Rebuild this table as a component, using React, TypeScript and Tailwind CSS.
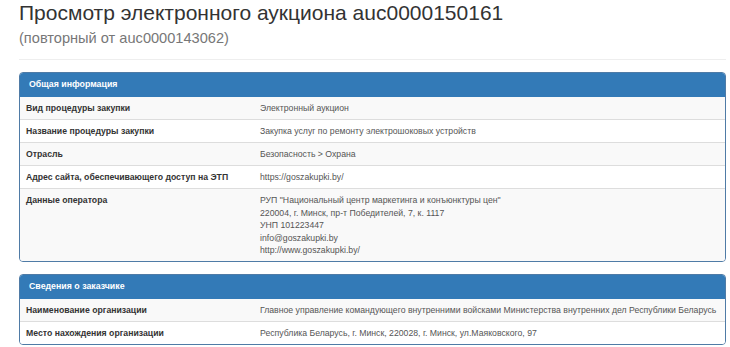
import React from "react";

type Row = { label: string; value: React.ReactNode };

const general: Row[] = [
  { label: "Вид процедуры закупки", value: "Электронный аукцион" },
  {
    label: "Название процедуры закупки",
    value: "Закупка услуг по ремонту электрошоковых устройств",
  },
  { label: "Отрасль", value: "Безопасность > Охрана" },
  {
    label: "Адрес сайта, обеспечивающего доступ на ЭТП",
    value: "https://goszakupki.by/",
  },
  {
    label: "Данные оператора",
    value: (
      <>
        <div>РУП "Национальный центр маркетинга и конъюнктуры цен"</div>
        <div>220004, г. Минск, пр-т Победителей, 7, к. 1117</div>
        <div>УНП 101223447</div>
        <div>info@goszakupki.by</div>
        <div>http://www.goszakupki.by/</div>
      </>
    ),
  },
];

const customer: Row[] = [
  {
    label: "Наименование организации",
    value:
      "Главное управление командующего внутренними войсками Министерства внутренних дел Республики Беларусь",
  },
  {
    label: "Место нахождения организации",
    value: "Республика Беларусь, г. Минск, 220028, г. Минск, ул.Маяковского, 97",
  },
];

const Panel: React.FC<{ title: string; rows: Row[] }> = ({ title, rows }) => (
  <div className="mt-[12px] rounded-[4px] border border-[#4f7ba6] overflow-hidden bg-white">
    <div className="h-[24px] bg-[#337ab7] px-[9px] flex items-center text-[8.8px] font-bold text-white">
      {title}
    </div>
    <div className="text-[8.7px] leading-[12.5px]">
      {rows.map((r, i) => (
        <div
          key={r.label}
          className={`flex ${i > 0 ? "border-t border-[#dddddd]" : ""} ${
            i % 2 === 0 ? "bg-[#f9f9f9]" : "bg-white"
          }`}
        >
          <div className="w-[234px] shrink-0 px-[6px] pt-[5px] pb-[4.5px] font-bold text-[#333]">
            {r.label}
          </div>
          <div className="flex-1 px-[6px] pt-[5px] pb-[4.5px] text-[#555]">
            {r.value}
          </div>
        </div>
      ))}
    </div>
  </div>
);

export default function App() {
  return (
    <div className="min-h-screen bg-white pl-[19px] pr-[4px] font-['Liberation_Sans',Arial,sans-serif] text-[#333]">
      <h1 className="pt-[1px] text-[21px] leading-[24px] font-normal">
        Просмотр электронного аукциона auc0000150161
      </h1>
      <div className="mt-[4px] text-[14.6px] leading-[18px] text-[#777]">
        (повторный от auc0000143062)
      </div>
      <hr className="mt-[12px] border-t border-[#eeeeee]" />
      <Panel title="Общая информация" rows={general} />
      <Panel title="Сведения о заказчике" rows={customer} />
    </div>
  );
}
